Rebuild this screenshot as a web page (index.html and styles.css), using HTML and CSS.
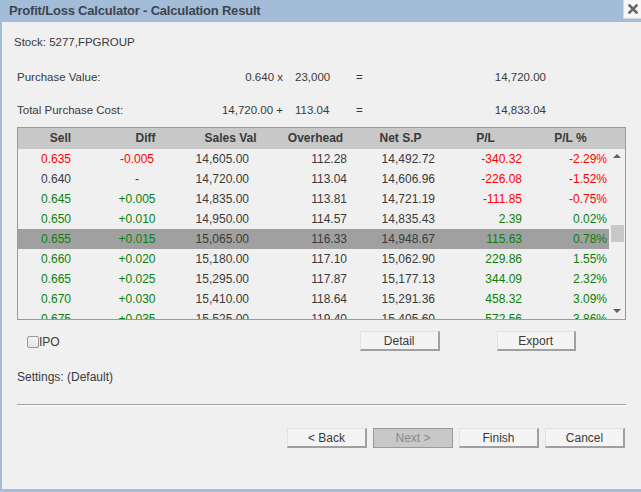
FILE: index.html
```html
<!DOCTYPE html>
<html>
<head>
<meta charset="utf-8">
<link rel="stylesheet" href="styles.css">
</head>
<body>
<div class="window">
  <div class="titlebar">
    <span class="title">Profit/Loss Calculator - Calculation Result</span>
    <span class="close"><svg width="10" height="10" viewBox="0 0 10 10"><path d="M1.5 1.5 L8.5 8.5 M8.5 1.5 L1.5 8.5" stroke="#666" stroke-width="2.6" stroke-linecap="square"/></svg></span>
  </div>
  <div class="content">
    <div class="stock">Stock: 5277,FPGROUP</div>
    <div class="calc">
      <div class="calc-row"><span class="lbl">Purchase Value:</span><span class="a">0.640 x</span><span class="b">23,000</span><span class="eq">=</span><span class="res">14,720.00</span></div>
      <div class="calc-row"><span class="lbl">Total Purchase Cost:</span><span class="a">14,720.00 +</span><span class="b">113.04</span><span class="eq">=</span><span class="res">14,833.04</span></div>
    </div>
    <div class="grid">
      <div class="grid-head">
        <span>Sell</span><span>Diff</span><span>Sales Val</span><span>Overhead</span><span>Net S.P</span><span>P/L</span><span>P/L %</span>
      </div>
      <div class="grid-body">
        <div class="rows">
          <div class="row"><span class="neg">0.635</span><span class="neg">-0.005</span><span>14,605.00</span><span>112.28</span><span>14,492.72</span><span class="neg">-340.32</span><span class="neg">-2.29%</span></div>
          <div class="row"><span>0.640</span><span>-</span><span>14,720.00</span><span>113.04</span><span>14,606.96</span><span class="neg">-226.08</span><span class="neg">-1.52%</span></div>
          <div class="row"><span class="pos">0.645</span><span class="pos">+0.005</span><span>14,835.00</span><span>113.81</span><span>14,721.19</span><span class="neg">-111.85</span><span class="neg">-0.75%</span></div>
          <div class="row"><span class="pos">0.650</span><span class="pos">+0.010</span><span>14,950.00</span><span>114.57</span><span>14,835.43</span><span class="pos">2.39</span><span class="pos">0.02%</span></div>
          <div class="row selected"><span class="pos">0.655</span><span class="pos">+0.015</span><span>15,065.00</span><span>116.33</span><span>14,948.67</span><span class="pos">115.63</span><span class="pos">0.78%</span></div>
          <div class="row"><span class="pos">0.660</span><span class="pos">+0.020</span><span>15,180.00</span><span>117.10</span><span>15,062.90</span><span class="pos">229.86</span><span class="pos">1.55%</span></div>
          <div class="row"><span class="pos">0.665</span><span class="pos">+0.025</span><span>15,295.00</span><span>117.87</span><span>15,177.13</span><span class="pos">344.09</span><span class="pos">2.32%</span></div>
          <div class="row"><span class="pos">0.670</span><span class="pos">+0.030</span><span>15,410.00</span><span>118.64</span><span>15,291.36</span><span class="pos">458.32</span><span class="pos">3.09%</span></div>
          <div class="row"><span class="pos">0.675</span><span class="pos">+0.035</span><span>15,525.00</span><span>119.40</span><span>15,405.60</span><span class="pos">572.56</span><span class="pos">3.86%</span></div>
        </div>
        <div class="scrollbar">
          <span class="arrow up"></span>
          <span class="track"><span class="thumb"></span></span>
          <span class="arrow down"></span>
        </div>
      </div>
    </div>
    <div class="actions">
      <label class="check"><span class="box"></span>IPO</label>
      <span class="btn detail">Detail</span>
      <span class="btn export">Export</span>
    </div>
    <div class="settings">Settings: (Default)</div>
    <div class="sep"></div>
    <div class="nav">
      <span class="btn">&lt; Back</span>
      <span class="btn disabled">Next &gt;</span>
      <span class="btn">Finish</span>
      <span class="btn">Cancel</span>
    </div>
  </div>
</div>
</body>
</html>
```
FILE: styles.css
```css
* { box-sizing: border-box; }
html, body { margin: 0; padding: 0; }
body {
  width: 641px;
  height: 492px;
  overflow: hidden;
  background: #f0f0f0;
  font-family: "Liberation Sans", Arial, sans-serif;
  color: #3a3a3a;
}
.window {
  height: 492px;
  border-left: 2px solid #a3bcd8;
  border-bottom: 3px solid #a3bcd8;
  background: #f0f0f0;
}
.titlebar {
  height: 22px;
  margin-left: -2px;
  background: #a3bcd8;
  display: flex;
  align-items: flex-start;
}
.title {
  font-weight: bold;
  font-size: 13px;
  letter-spacing: -0.2px;
  line-height: 22px;
  padding-left: 9px;
  color: #3d4450;
}
.close {
  margin-left: auto;
  width: 18px;
  height: 19px;
  background: #f7f7f7;
  border-left: 1px solid #d8d8d8;
  border-bottom: 1px solid #d8d8d8;
  display: flex;
  align-items: center;
  justify-content: center;
}
.content {
  padding-left: 15px;
  font-size: 11.5px;
}
.stock {
  margin-top: 10px;
  margin-left: -3px;
  line-height: 20px;
}
.calc { margin-top: 15px; }
.calc-row {
  display: grid;
  grid-template-columns: 190px 76px 73px 20px 170px;
  line-height: 20px;
  height: 20px;
}
.calc-row + .calc-row { margin-top: 13px; }
.calc-row .a { text-align: right; }
.calc-row .b { padding-left: 12px; }
.calc-row .res { text-align: right; }

.grid {
  margin-top: 7px;
  width: 609px;
  border: 1px solid #9a9a9a;
  font-size: 12px;
}
.grid-head {
  display: grid;
  grid-template-columns: repeat(7, 85px);
  height: 21px;
  line-height: 21px;
  background: #c8c8c8;
  font-weight: bold;
  color: #3a3a3a;
  text-align: center;
}
.grid-body {
  display: flex;
  height: 170px;
  overflow: hidden;
}
.rows {
  width: 591px;
  overflow: hidden;
}
.row {
  display: grid;
  grid-template-columns: 85px 85px 85px 85px 85px 85px 81px;
  height: 20px;
  line-height: 20px;
  text-align: right;
}
.row span:nth-child(1) { padding-right: 32px; }
.row span:nth-child(2) { text-align: center; padding-right: 17px; }
.row span:nth-child(3) { padding-right: 24px; }
.row span:nth-child(4) { padding-right: 11px; }
.row span:nth-child(5) { padding-right: 8px; }
.row span:nth-child(6) { padding-right: 6px; }
.row span:nth-child(7) { padding-right: 2px; }
.row.selected { background: #a0a0a0; }
.neg { color: #ff0000; }
.pos { color: #0a800a; }

.scrollbar {
  width: 16px;
  display: flex;
  flex-direction: column;
  align-items: center;
}
.arrow {
  width: 0;
  height: 0;
  border-left: 4px solid transparent;
  border-right: 4px solid transparent;
}
.arrow.up {
  margin-top: 5px;
  border-bottom: 4px solid #606060;
}
.arrow.down {
  margin-bottom: 6px;
  border-top: 4px solid #606060;
}
.track {
  flex: 1;
  width: 100%;
  padding-top: 67px;
  display: flex;
  justify-content: center;
}
.thumb {
  width: 13px;
  height: 17px;
  background: #c8c8c8;
}

.actions {
  margin-top: 11px;
  height: 20px;
  display: flex;
  align-items: center;
  font-size: 12px;
}
.check {
  display: flex;
  align-items: center;
  margin-left: 10px;
  margin-top: 2px;
}
.box {
  width: 12px;
  height: 12px;
  border: 1px solid #9a9a9a;
  border-radius: 2px;
  background: linear-gradient(#f4f4f4, #e4e4e4);
}
.btn {
  display: inline-flex;
  align-items: center;
  justify-content: center;
  width: 80px;
  height: 20px;
  background: #f4f4f4;
  border-top: 1px solid #e2e2e2;
  border-left: 1px solid #e2e2e2;
  border-right: 2px solid #a0a0a0;
  border-bottom: 2px solid #a0a0a0;
  font-size: 12px;
  color: #3a3a3a;
}
.btn.detail { margin-left: 300px; }
.btn.export { margin-left: 57px; width: 79px; }
.btn.disabled {
  background: #c8c8c8;
  border: 1px solid #9a9a9a;
  color: #8a8a8a;
}
.settings {
  margin-top: 16px;
  line-height: 20px;
  font-size: 12px;
}
.sep {
  margin-top: 17px;
  width: 609px;
  height: 2px;
  border-top: 1px solid #a0a0a0;
  border-bottom: 1px solid #fafafa;
}
.nav {
  margin-top: 22px;
  display: flex;
  gap: 6px;
  padding-left: 270px;
}
```
